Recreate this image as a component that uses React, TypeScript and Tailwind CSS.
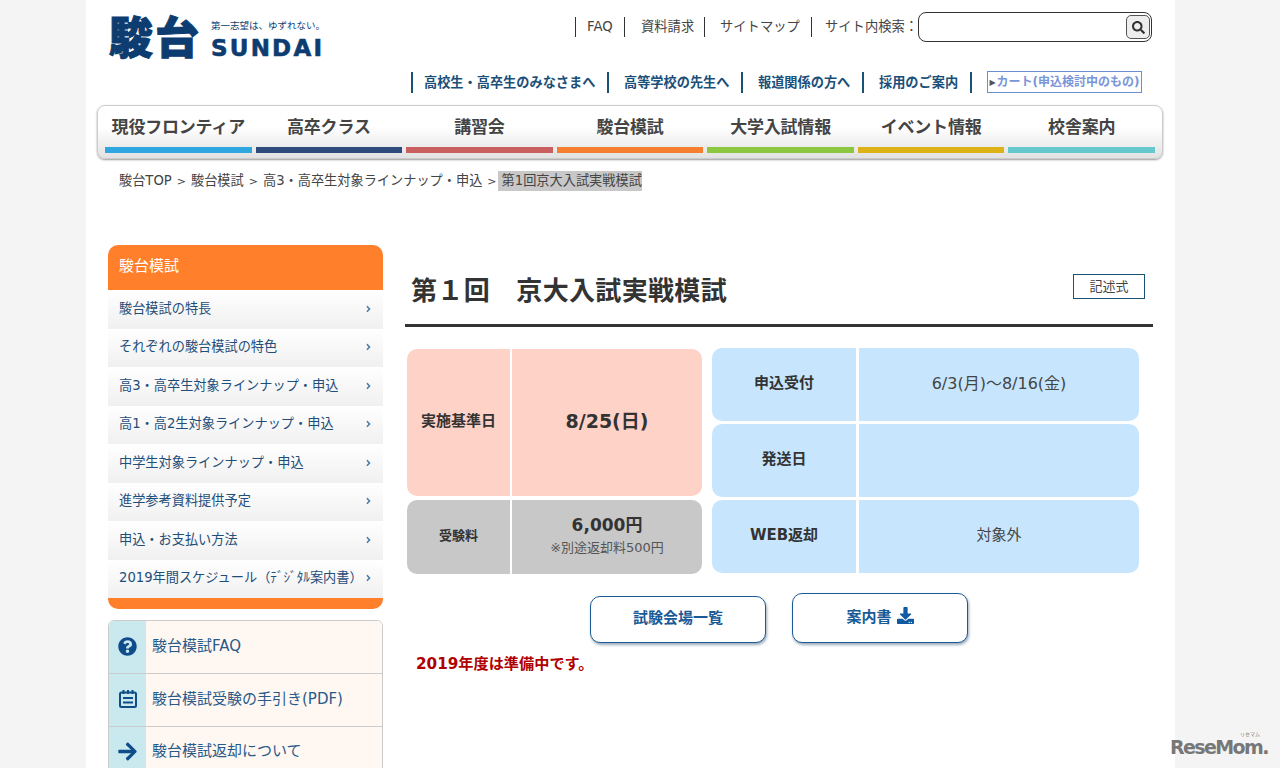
import { FaArrowRight, FaDownload, FaQuestionCircle, FaSearch, FaAngleRight } from "react-icons/fa";

const topLinks = [
  { label: "FAQ", cls: "w-[49px] pl-[11px]" },
  { label: "資料請求", cls: "w-[80px] pl-[16px]" },
  { label: "サイトマップ", cls: "w-[107px] pl-[15px]" },
];

const audienceLinks = [
  { label: "高校生・高卒生のみなさまへ", cls: "w-[196px] pl-[11px]" },
  { label: "高等学校の先生へ", cls: "w-[134px] pl-[15px]" },
  { label: "報道関係の方へ", cls: "w-[121px] pl-[15px]" },
  { label: "採用のご案内", cls: "w-[108px] pl-[15px]" },
];

const navItems = [
  { label: "現役フロンティア", bar: "bg-[#2ea7e0]" },
  { label: "高卒クラス", bar: "bg-[#2f4b7c]" },
  { label: "講習会", bar: "bg-[#c9605f]" },
  { label: "駿台模試", bar: "bg-[#f57f2e]" },
  { label: "大学入試情報", bar: "bg-[#8dc63f]" },
  { label: "イベント情報", bar: "bg-[#dcb216]" },
  { label: "校舎案内", bar: "bg-[#66c8cc]" },
];

const crumbs = ["駿台TOP", "駿台模試", "高3・高卒生対象ラインナップ・申込"];

const sideLinks = [
  "駿台模試の特長",
  "それぞれの駿台模試の特色",
  "高3・高卒生対象ラインナップ・申込",
  "高1・高2生対象ラインナップ・申込",
  "中学生対象ラインナップ・申込",
  "進学参考資料提供予定",
  "申込・お支払い方法",
  "2019年間スケジュール（ﾃﾞｼﾞﾀﾙ案内書）",
];

function CalendarIcon() {
  return (
    <svg viewBox="0 0 20 20" className="h-[20px] w-[20px]" fill="none" stroke="currentColor">
      <rect x="2" y="3.5" width="16" height="14.5" rx="1.5" strokeWidth="2" />
      <path d="M5.5 1v4M10 1v4M14.5 1v4" strokeWidth="2" />
      <path d="M5 9h10M5 13.5h10" strokeWidth="1.8" />
    </svg>
  );
}

const infoLinks = [
  { label: "駿台模試FAQ", icon: <FaQuestionCircle className="h-[19px] w-[19px]" />, row: "h-[52px]" },
  { label: "駿台模試受験の手引き(PDF)", icon: <CalendarIcon />, row: "h-[53px] border-t border-[#ccc]" },
  { label: "駿台模試返却について", icon: <FaArrowRight className="h-[21px] w-[21px]" />, row: "h-[53px] border-t border-[#ccc] pb-[1px]" },
];

const scheduleRows = [
  { label: "申込受付", value: "6/3(月)～8/16(金)", size: "text-[16px]" },
  { label: "発送日", value: "", size: "text-[15px]" },
  { label: "WEB返却", value: "対象外", size: "text-[15px]" },
];

function Logo() {
  return (
    <div className="ml-[23px] mt-[12px] flex items-start text-[#0c3c70]">
      <div className="text-[44px] leading-[54px] font-black tracking-[2px] [-webkit-text-stroke:1px_#0c3c70]">駿台</div>
      <div className="ml-[10px] mt-[7px]">
        <div className="text-[9.5px] leading-[14px] whitespace-nowrap">第一志望は、ゆずれない。</div>
        <div className="mt-[3px] text-[23px] leading-[24px] font-bold tracking-[2.2px] [-webkit-text-stroke:0.6px_#0c3c70]">
          SUNDAI
        </div>
      </div>
    </div>
  );
}

function Header() {
  return (
    <header className="flex h-[105px]">
      <Logo />
      <div className="ml-auto flex flex-col items-end pr-[23px]">
        <div className="mt-[12px] flex h-[30px] items-center text-[13.3px] leading-[20px] text-[#444]">
          {topLinks.map((link) => (
            <span key={link.label} className={`${link.cls} border-l border-[#333] whitespace-nowrap`}>
              {link.label}
            </span>
          ))}
          <span className="w-[107px] border-l border-[#333] pl-[13px] whitespace-nowrap">サイト内検索：</span>
          <div className="flex h-[30px] w-[234px] items-center justify-end rounded-[8px] border border-[#333] bg-white pr-[1px]">
            <div className="flex h-[24px] w-[24px] items-center justify-center rounded-[5px] border border-[#555] bg-[#eee]">
              <FaSearch className="h-[13px] w-[13px] text-[#333]" />
            </div>
          </div>
        </div>
        <div className="mt-[29px] mr-[10px] flex items-center text-[13.2px] leading-[21px] font-bold text-[#1a4f7a]">
          {audienceLinks.map((link) => (
            <span key={link.label} className={`${link.cls} border-l-2 border-[#1a5276] whitespace-nowrap`}>
              {link.label}
            </span>
          ))}
          <span className="h-[21px] w-[17px] border-l-2 border-[#1a5276]" />
          <span className="flex h-[22px] w-[155px] items-center justify-center border border-[#6a8fd0] text-[12px] font-bold whitespace-nowrap text-[#7a95d8]">
            <span className="mr-[1px] text-[8px] text-[#555]">▶</span>カート(申込検討中のもの)
          </span>
        </div>
      </div>
    </header>
  );
}

function GlobalNav() {
  return (
    <nav className="ml-[11px] grid h-[54px] w-[1066px] grid-cols-7 gap-[4px] rounded-[8px] border border-[#ccc] bg-gradient-to-b from-white from-40% to-[#e2e2e2] px-[7px] shadow-[0_1px_2px_#999]">
      {navItems.map((item) => (
        <div key={item.label} className="flex flex-col items-center">
          <span className="mt-[8px] text-[17px] leading-[26px] font-bold tracking-[-0.2px] whitespace-nowrap text-[#444]">
            {item.label}
          </span>
          <span className={`mt-[7px] h-[6px] w-full ${item.bar}`} />
        </div>
      ))}
    </nav>
  );
}

function Breadcrumb() {
  return (
    <div className="ml-[33px] mt-[12px] flex h-[20px] items-center text-[13.2px] leading-[20px] whitespace-nowrap text-[#444]">
      {crumbs.map((crumb) => (
        <span key={crumb}>
          {crumb}
          <span className="mx-[5px] text-[11px]">&gt;</span>
        </span>
      ))}
      <span className="ml-[-4px] bg-[#c8c8c8] pl-[4px]">第1回京大入試実戦模試</span>
    </div>
  );
}

function Sidebar() {
  return (
    <aside className="w-[275px] shrink-0">
      <div className="overflow-hidden rounded-[10px] bg-[#ff7f2a]">
        <div className="flex h-[45px] items-center pb-[2px] pl-[11px] text-[15px] text-white">駿台模試</div>
        {sideLinks.map((label) => (
          <div
            key={label}
            className="flex h-[38.5px] items-center justify-between bg-gradient-to-b from-white to-[#f0f0f0] pb-[1px] pl-[11px] pr-[11px] text-[13.2px] whitespace-nowrap text-[#1f4e79]"
          >
            <span>{label}</span>
            <FaAngleRight className="h-[10px] w-[7px] shrink-0 text-[#4a7ca8]" />
          </div>
        ))}
        <div className="h-[11px]" />
      </div>
      <div className="mt-[11px] overflow-hidden rounded-[6px] border border-[#ccc]">
        {infoLinks.map((link) => (
          <div key={link.label} className={`flex bg-[#fff8f2] ${link.row}`}>
            <div className="flex w-[37px] items-center justify-center bg-[#c9e9ee] pb-[2px] text-[#0f4c8a]">{link.icon}</div>
            <div className="flex items-center pb-[2px] pl-[6px] text-[15px] text-[#2a5a8a]">{link.label}</div>
          </div>
        ))}
      </div>
    </aside>
  );
}

function SummaryTables() {
  return (
    <div className="ml-[2px] mt-[21px] flex items-start gap-[10px]">
      <div className="grid w-[295px] grid-cols-[103px_190px] grid-rows-[147px_74px] gap-x-[2px] gap-y-[4px] pt-[1px] text-[#333]">
        <div className="flex items-center justify-center rounded-l-[10px] bg-[#ffd2c7] pb-[2px] text-[15px] font-bold">実施基準日</div>
        <div className="flex items-center justify-center rounded-r-[10px] bg-[#ffd2c7] pb-[2px] text-[19px] font-bold">8/25(日)</div>
        <div className="flex items-center justify-center rounded-l-[10px] bg-[#c8c8c8] pb-[2px] text-[13px] font-bold">受験料</div>
        <div className="flex flex-col items-center justify-center rounded-r-[10px] bg-[#c8c8c8] pb-[5px]">
          <span className="text-[17px] leading-[26px] font-bold">6,000円</span>
          <span className="text-[13px] leading-[20px] text-[#555]">※別途返却料500円</span>
        </div>
      </div>
      <div className="grid w-[427px] grid-cols-[144px_280px] grid-rows-[73px_73px_73px] gap-x-[3px] gap-y-[3px] text-[#333]">
        {scheduleRows.map((row) => (
          <div key={row.label} className="contents">
            <div className="flex items-center justify-center rounded-l-[10px] bg-[#c7e6fd] pb-[2px] text-[15px] font-bold">{row.label}</div>
            <div className={`flex items-center justify-center rounded-r-[10px] bg-[#c7e6fd] pb-[2px] text-[#444] ${row.size}`}>{row.value}</div>
          </div>
        ))}
      </div>
    </div>
  );
}

function MainContent() {
  return (
    <main className="ml-[22px] w-[748px]">
      <div className="flex h-[82px] items-start justify-between border-b-[3px] border-[#333] pr-[8px]">
        <h1 className="ml-[6px] mt-[29px] text-[26px] leading-[34px] font-bold tracking-[0.33px] text-[#333]">第１回　京大入試実戦模試</h1>
        <span className="mt-[29px] flex h-[25px] w-[72px] items-center justify-center border border-[#1a5276] text-[13px] text-[#444]">
          記述式
        </span>
      </div>
      <SummaryTables />
      <div className="mt-[19px] ml-[185px] flex items-end gap-[26px] text-[15px] font-bold text-[#1a5a96]">
        <div className="flex h-[47px] w-[176px] items-center justify-center rounded-[10px] border border-[#1a5a96] bg-white pb-[2px] shadow-[1px_2px_3px_#9ab]">
          試験会場一覧
        </div>
        <div className="flex h-[50px] w-[176px] items-center justify-center gap-[5px] rounded-[10px] border border-[#1a5a96] bg-white pb-[2px] shadow-[1px_2px_3px_#9ab]">
          案内書
          <FaDownload className="mb-[3px] h-[17px] w-[17px] text-[#0f5aa0]" />
        </div>
      </div>
      <p className="ml-[11px] mt-[11px] text-[15.2px] leading-[20px] font-bold text-[#b00000]">2019年度は準備中です。</p>
    </main>
  );
}

export default function App() {
  return (
    <div className="relative h-[768px] overflow-hidden bg-[#f4f4f4] font-['DejaVu_Sans','Noto_Sans_CJK_JP',sans-serif]">
      <div className="ml-[86px] h-full w-[1089px] bg-white">
        <Header />
        <GlobalNav />
        <Breadcrumb />
        <div className="ml-[22px] mt-[54px] flex">
          <Sidebar />
          <MainContent />
        </div>
      </div>
      <div className="absolute left-[1170px] top-[731px] w-[98px] text-[#777]">
        <div className="pr-[8px] text-right text-[5px] leading-[6px]">リセマム</div>
        <div className="text-[19px] leading-[20px] font-bold tracking-[-1.6px] whitespace-nowrap">ReseMom.</div>
      </div>
    </div>
  );
}
